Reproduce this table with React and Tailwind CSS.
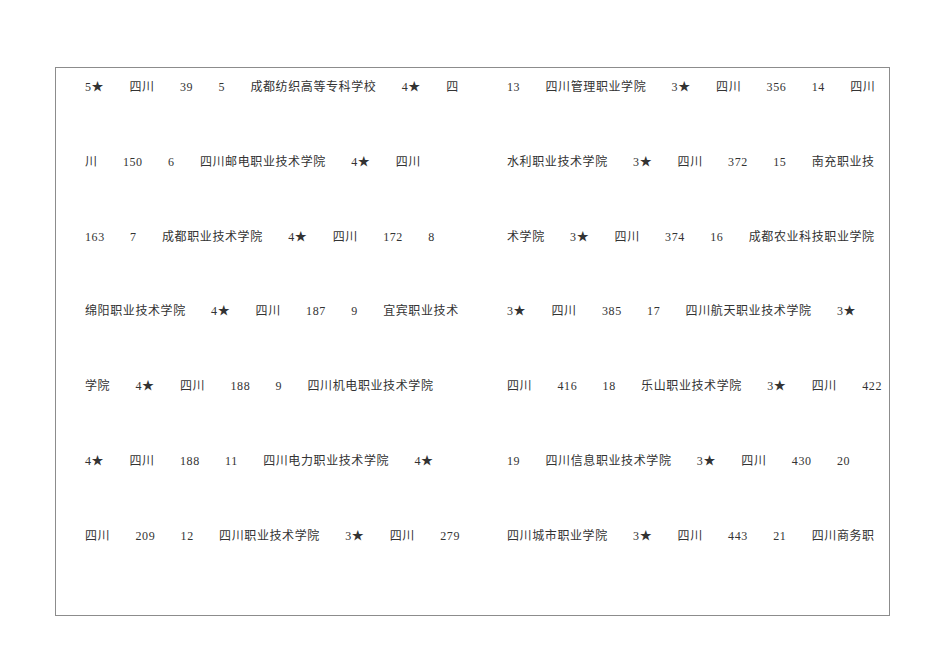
const left = [
  ["5★", "四川", "39", "5", "成都纺织高等专科学校", "4★", "四"],
  ["川", "150", "6", "四川邮电职业技术学院", "4★", "四川"],
  ["163", "7", "成都职业技术学院", "4★", "四川", "172", "8"],
  ["绵阳职业技术学院", "4★", "四川", "187", "9", "宜宾职业技术"],
  ["学院", "4★", "四川", "188", "9", "四川机电职业技术学院"],
  ["4★", "四川", "188", "11", "四川电力职业技术学院", "4★"],
  ["四川", "209", "12", "四川职业技术学院", "3★", "四川", "279"],
];

const right = [
  ["13", "四川管理职业学院", "3★", "四川", "356", "14", "四川"],
  ["水利职业技术学院", "3★", "四川", "372", "15", "南充职业技"],
  ["术学院", "3★", "四川", "374", "16", "成都农业科技职业学院"],
  ["3★", "四川", "385", "17", "四川航天职业技术学院", "3★"],
  ["四川", "416", "18", "乐山职业技术学院", "3★", "四川", "422"],
  ["19", "四川信息职业技术学院", "3★", "四川", "430", "20"],
  ["四川城市职业学院", "3★", "四川", "443", "21", "四川商务职"],
];

function Column({ lines, className }) {
  return (
    <div className={`flex flex-col gap-[54.8px] ${className}`}>
      {lines.map((line, i) => (
        <div key={i} className="flex h-[20px] items-center gap-[25.3px] whitespace-nowrap leading-[20px]">
          {line.map((t, j) => (
            <span key={j}>{t}</span>
          ))}
        </div>
      ))}
    </div>
  );
}

export default function App() {
  return (
    <div className="min-h-[672px] w-[950px] bg-white pt-[67px] pl-[55px]">
      <div
        className="flex h-[549px] w-[835px] border border-[#8c8c8c] pt-[9px] pl-[29px] text-[12px] tracking-[0.6px] text-[#333]"
        style={{ fontFamily: '"Liberation Serif", "Noto Sans CJK SC", serif' }}
      >
        <Column lines={left} className="w-[422px]" />
        <Column lines={right} className="flex-1" />
      </div>
    </div>
  );
}
